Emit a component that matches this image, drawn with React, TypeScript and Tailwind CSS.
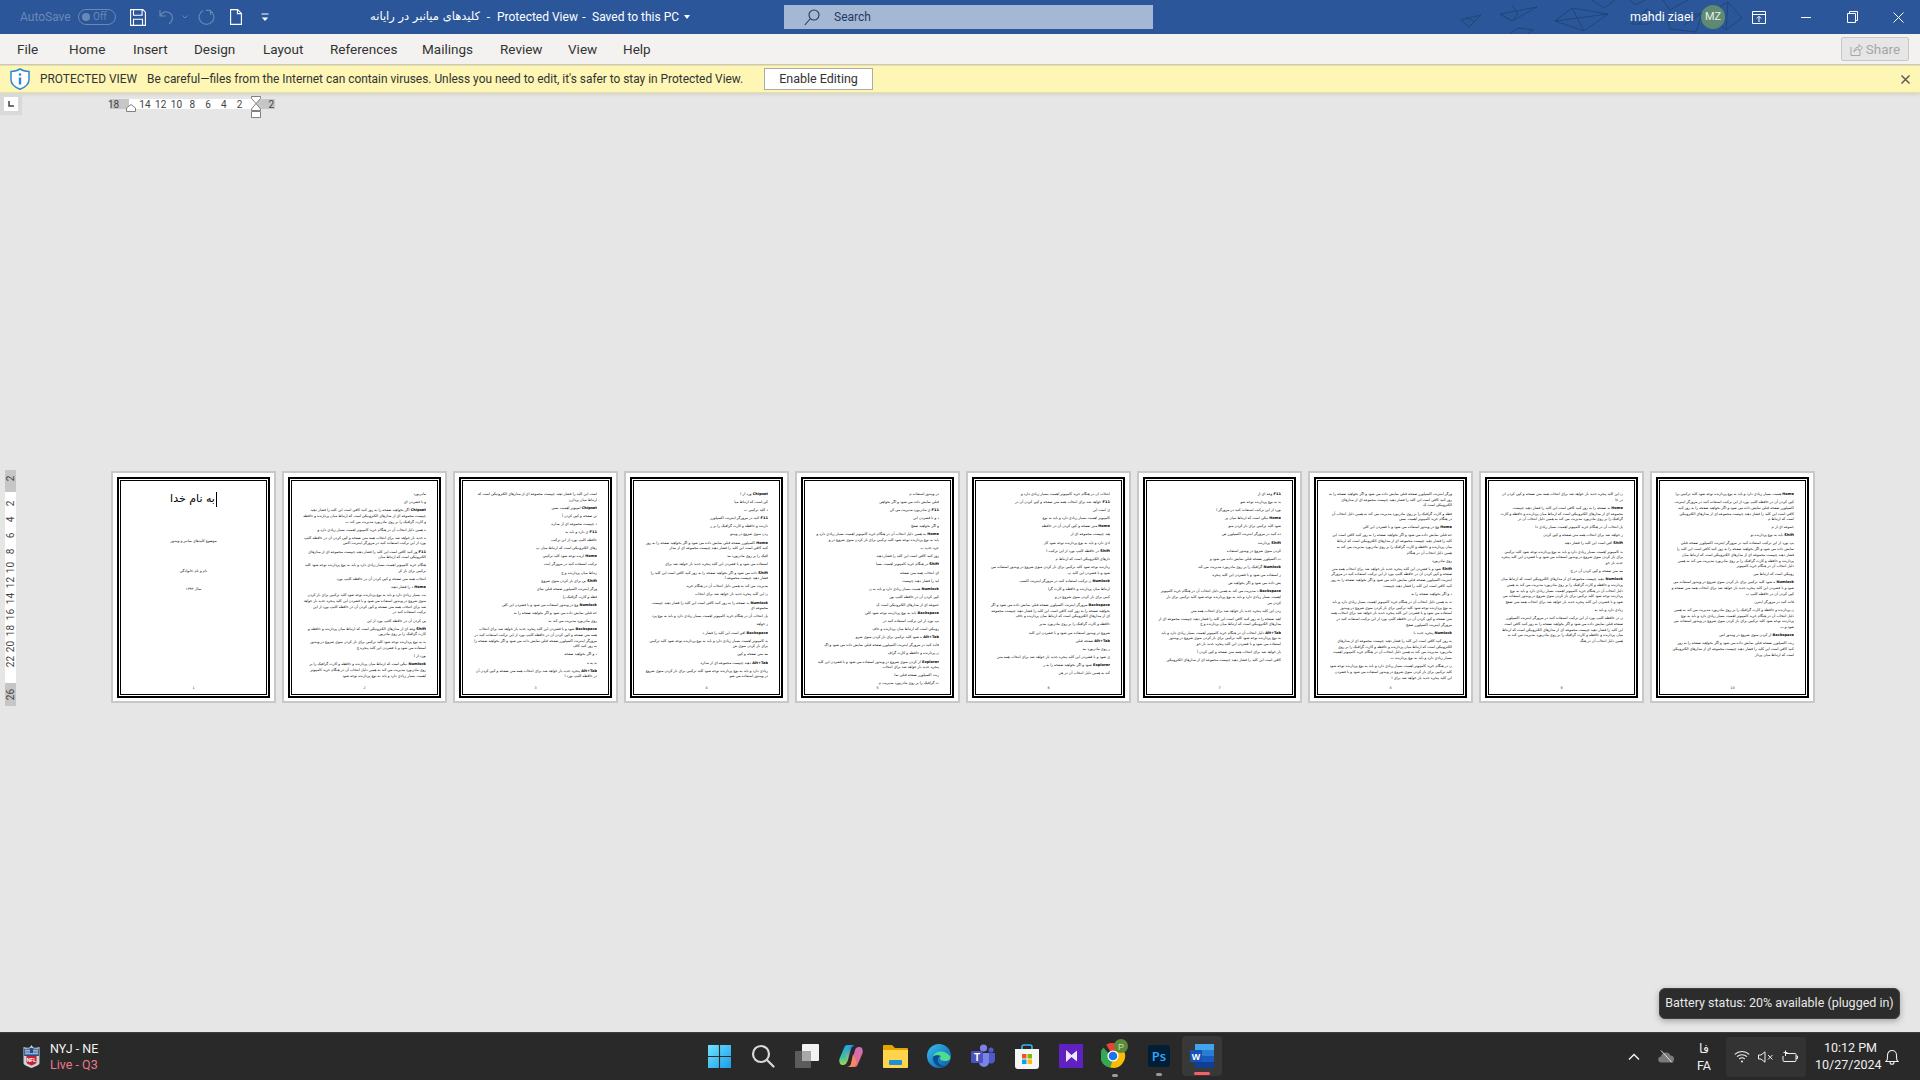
import React from "react";

const BASE =
  "کلید ترکیبی برای باز کردن منوی شروع در ویندوز استفاده می شود و با فشردن این کلید پنجره جدید باز خواهد شد برای انتخاب همه متن صفحه و کپی کردن آن در حافظه کلیپ بورد از این ترکیب استفاده کنید در مرورگر اینترنت اکسپلورر صفحه قبلی نمایش داده می شود و اگر بخواهید صفحه را به روز کنید کافی است این کلید را فشار دهید چیپست مجموعه ای از مدارهای الکترونیکی است که ارتباط میان پردازنده و حافظه و کارت گرافیک را بر روی مادربورد مدیریت می کند به همین دلیل انتخاب آن در هنگام خرید کامپیوتر اهمیت بسیار زیادی دارد و باید به نوع پردازنده توجه شود ";

const KEYS = ["Ctrl+O", "Alt+Tab", "Shift", "Chipset", "Explorer", "Numlock", "F11", "WinKey+E", "Backspace", "Home"];

const PAGES: number[][] = [
  [],
  [.13,.2,2.8,1.05,1.9,1.45,1.5,.8,.22,3.7,.55,1.45,1.75,.15,2.85],
  [1.35,.25,.3,.4,.25,.45,.55,.4,.5,.35,.4,.55,.3,.7,.75,.45,3.4,.3,.1,1.25],
  [.12,.3,.22,.5,.55,.33,1.9,.4,.95,1.4,.75,.7,1.05,1.15,.12,.4,1.5,.25,.45,1.55],
  [.3,.55,.35,.25,.25,2.15,.15,.6,.5,.35,.35,.5,.45,.55,.5,.55,.6,.6,1.05,.45,1.5,.4,.55],
  [.9,.75,.15,.7,.5,.33,.65,.5,.5,1.5,.65,.6,.5,2.85,.65,.75,.15,.25,1.05,.45,.5],
  [.15,.4,.65,.4,.5,.55,.12,.5,.6,.6,.65,.45,2.2,.85,1.9,2.9,.75,1.05],
  [2.4,1.6,.7,3.7,.2,3.9,.4,4.9,.2,3.9,2.9],
  [1.2,3.05,.85,.7,.45,2.5,.45,5.4,.3,4.8],
  [1.05,3.5,.2,.35,4.85,.35,2.5,.4,3.5,.45,2.55],
];

const CPL = 66;

function slice(n: number, off: number) {
  const len = Math.round(n * CPL);
  const start = (off * 37) % BASE.length;
  const rep = BASE + BASE + BASE + BASE;
  return rep.slice(start, start + len).trim();
}

function Sheet({ index }: { index: number }) {
  return (
    <div className="w-[165px] h-[232px] bg-white border-2 border-[#c8c8c8] pt-[4px] px-[4px] pb-[3px]">
      <div className="h-full border-2 border-black p-px">
        <div className="h-full border border-black flex flex-col px-[11px] pt-[11px] pb-[4px]" dir="rtl">
          <div className="flex-1 overflow-hidden font-['DejaVu_Sans',sans-serif] text-[3.6px] leading-[5.7px] text-black">
            {index === 0 ? (
              <div className="flex flex-col items-center -mt-[2px]">
                <div className="text-[11px] leading-[17px] border-r border-black pr-px">به نام خدا</div>
                <div className="mt-[32px]">موضوع کلیدهای میانبر و ویندوز</div>
                <div className="mt-[24px]">نام و نام خانوادگی</div>
                <div className="mt-[13px]">سال ۱۳۹۳</div>
              </div>
            ) : (
              PAGES[index].map((n, i) => (
                <p key={i} className="mb-[2.4px] text-right">
                  {(i + index) % 3 === 0 && <b>{KEYS[(i + index) % KEYS.length]} </b>}
                  {slice(n, i * 5 + index * 11)}
                </p>
              ))
            )}
          </div>
          <div className="text-center text-[3.4px] leading-[4px] text-[#333] font-['DejaVu_Sans',sans-serif]">{index + 1}</div>
        </div>
      </div>
    </div>
  );
}

function TitleIcons() {
  return (
    <div className="flex items-center">
      <svg width="16" height="17" viewBox="0 0 16 17" fill="none" stroke="#fff" strokeWidth="1.1" className="ml-[14px]">
        <path d="M.6.6h12.2l2.6 2.6v13.2H.6z" />
        <path d="M3.5.8v5.4h8.6V.8M3.5 16.2v-6h9v6" />
      </svg>
      <svg width="15" height="16" viewBox="0 0 15 16" fill="none" stroke="#6b88b3" strokeWidth="1.2" className="ml-[13px]">
        <path d="M1 1v6h6M1.4 6.6C3 4 5.5 2.6 8 3c3.6.5 6 3.6 5.4 7-.3 2-1.5 3.6-3.4 5" />
      </svg>
      <svg width="6" height="4" viewBox="0 0 6 4" fill="none" stroke="#6b88b3" className="ml-[8px]">
        <path d="M.5.5 3 3l2.5-2.5" />
      </svg>
      <svg width="17" height="17" viewBox="0 0 17 17" fill="none" stroke="#6b88b3" strokeWidth="1.1" className="ml-[10px]">
        <path d="M12 1.5a7.4 7.4 0 1 1-7 0M12.5 1v5M12.5 1.4H8" />
      </svg>
      <svg width="12" height="16" viewBox="0 0 12 16" fill="none" stroke="#fff" strokeWidth="1.1" className="ml-[15px]">
        <path d="M.6.6h7l3.8 3.8v11H.6zM7.4.8v3.8h3.8" />
      </svg>
      <svg width="8" height="9" viewBox="0 0 8 9" fill="none" stroke="#fff" className="ml-[19px]">
        <path d="M.5 1h7" />
        <path d="M.8 4.5h6.4L4 8z" fill="#fff" stroke="none" />
      </svg>
    </div>
  );
}

function Triangles() {
  return (
    <svg width="340" height="34" viewBox="0 0 340 34" fill="none" stroke="#1f4679" strokeWidth="1" className="absolute left-[1440px] top-0">
      <path d="M21 20l20-5-12 12zM26 17l8 4" />
      <path d="M60 14l37-7-25 14zM60 14l12 7M72 5l6 9-6 7" />
      <path d="M115 21l17-13 36 6-24 17zM132 8l12 23M115 21l53-7" />
      <path d="M152 0l12 8 11-8M190 0l5 5 10-5" />
      <path d="M191 24l16-15 8 4-6 11zM207 9l-8 15" />
      <path d="M70 34l8-6 15 2-5 4" />
      <path d="M228 22l34-9-6 19-26-3zM262 13l-18 12" />
      <path d="M268 14l20-12 14 16-16 12zM288 2l-2 28" />
      <path d="M223 0l7 10 18-10" />
    </svg>
  );
}

function RulerH() {
  const nums = ["14", "12", "10", "8", "6", "4", "2"];
  return (
    <div className="absolute left-[110px] top-[6px] flex h-[10px] text-[10px] leading-[11px] text-[#444] font-['Roboto',sans-serif]">
      <div className="w-[19px] bg-[#c6c6c6] flex justify-start"><span className="-ml-[2px]">18</span></div>
      <div className="w-[127px] bg-white flex pl-[8px]">
        {nums.map((n) => (
          <div key={n} className="w-[15.8px] text-center">{n}</div>
        ))}
      </div>
      <div className="w-[19px] bg-[#c6c6c6] flex justify-end pr-[1px]">2</div>
      <svg width="10" height="8" viewBox="0 0 10 8" className="absolute left-[16px] top-[5px]" fill="#fff" stroke="#808080">
        <path d="M.5 7.5v-3.500L5 .5 9.500 4v3.500z" />
      </svg>
      <svg width="10" height="23" viewBox="0 0 10 23" className="absolute left-[141px] top-[-3px]" fill="#fff" stroke="#808080">
        <path d="M.5.5h9v2L5 7.5.5 2.500zM.5 14.500v-1.500L5 7.500 9.500 13v1.500z" />
        <path d="M.5 15.500h9v6h-9z" />
      </svg>
    </div>
  );
}

function RulerV() {
  const nums = ["2", "4", "6", "8", "10", "12", "14", "16", "18", "20", "22"];
  return (
    <div className="w-[11px] h-[236px] ml-[5px] flex flex-col text-[10px] leading-[11px] text-[#444] font-['Roboto',sans-serif]">
      <div className="h-[22px] bg-[#c6c6c6] flex items-center justify-center pb-[6px]"><span className="-rotate-90">2</span></div>
      <div className="h-[191px] bg-white pt-[4px]">
        {nums.map((n) => (
          <div key={n} className="h-[15.8px] flex items-center justify-center"><span className="-rotate-90">{n}</span></div>
        ))}
      </div>
      <div className="h-[23px] bg-[#c6c6c6] flex items-center justify-center"><span className="-rotate-90">26</span></div>
    </div>
  );
}

function Win() {
  return (
    <svg width="23" height="23" viewBox="0 0 24 24">
      <defs>
        <linearGradient id="wg" x1="0" y1="0" x2="1" y2="1">
          <stop offset="0" stopColor="#6fe3ff" />
          <stop offset="1" stopColor="#1a9de8" />
        </linearGradient>
      </defs>
      <path d="M0 0h11.400v11.400H0zM12.600 0H24v11.400H12.600zM0 12.600h11.400V24H0zM12.600 12.600H24V24H12.600z" fill="url(#wg)" />
    </svg>
  );
}

function Search() {
  return (
    <svg width="24" height="24" viewBox="0 0 24 24" fill="none" stroke="#d9d9d9" strokeWidth="2.2">
      <circle cx="10" cy="10" r="8" />
      <path d="M16 16l6.500 6.500" strokeLinecap="round" />
    </svg>
  );
}

function TaskView() {
  return (
    <svg width="24" height="24" viewBox="0 0 24 24">
      <rect x="0" y="7" width="16" height="17" rx="1" fill="#5c5c5c" />
      <rect x="7" y="0" width="17" height="17" rx="1" fill="#f2f2f2" />
      <rect x="7" y="7" width="9" height="10" fill="#a8a8a8" />
    </svg>
  );
}

function Copilot() {
  return (
    <svg width="24" height="24" viewBox="0 0 24 24">
      <defs>
        <linearGradient id="c1" x1="0" y1="0" x2="0" y2="1"><stop offset="0" stopColor="#1aa7e8" /><stop offset=".6" stopColor="#37c2a8" /><stop offset="1" stopColor="#a6d84a" /></linearGradient>
        <linearGradient id="c2" x1="0" y1="0" x2="1" y2="1"><stop offset="0" stopColor="#b86bea" /><stop offset="1" stopColor="#f5706f" /></linearGradient>
        <linearGradient id="c3" x1="0" y1="0" x2="0" y2="1"><stop offset="0" stopColor="#2c7cf0" /><stop offset="1" stopColor="#ffc83d" /></linearGradient>
      </defs>
      <path d="M8 1h8c-2 0-3 1-4 3L8 18c-.600 2-2 3-4 3H3.500C.5 21-.5 17 .8 14L5.500 3C6 1.800 7 1 8 1z" fill="url(#c1)" />
      <path d="M16 23H8c2 0 3-1 4-3l4-14c.600-2 2-3 4-3h.500c3 0 4 4 2.700 7l-4.700 11c-.500 1.200-1.500 2-2.500 2z" fill="url(#c2)" />
      <path d="M11 2h5c-2 0-3 1-4 3L8.500 18 6 9z" fill="url(#c3)" opacity=".6" />
      <path d="M8 23h6c2-1 3-3 3.500-5L14 10l-2 10c-.500 2-2 3-4 3z" fill="#f78a5a" />
    </svg>
  );
}

function Folder() {
  return (
    <svg width="25" height="24" viewBox="0 0 25 24">
      <path d="M0 2a1 1 0 0 1 1-1h8l3 3h12a1 1 0 0 1 1 1v3H0z" fill="#e5a500" />
      <path d="M0 6h25v17a1 1 0 0 1-1 1H1a1 1 0 0 1-1-1z" fill="#ffd44d" />
      <rect x="6" y="16" width="13" height="5" rx="1" fill="#1c8fd9" />
    </svg>
  );
}

function Edge() {
  return (
    <svg width="24" height="24" viewBox="0 0 24 24">
      <defs>
        <linearGradient id="e1" x1="0" y1="0" x2="1" y2="1"><stop offset="0" stopColor="#35c1f1" /><stop offset="1" stopColor="#0c59a4" /></linearGradient>
      </defs>
      <circle cx="12" cy="12" r="12" fill="url(#e1)" />
      <path d="M6 12C8 7 17 5 23 12c1 3-1 5-5 5-3 0-5-1-5-3 0-1 1-2 1-2-3-1-6-1-8 0z" fill="#4fdc8f" />
      <path d="M6 13c-1 5 4 10 9 10 2 0 3-1 4-1-5 0-8-2-8-6 0-2 1-4 3-4-3-1-6-1-8 1z" fill="#0a4d92" />
    </svg>
  );
}

function Teams() {
  return (
    <svg width="24" height="24" viewBox="0 0 24 24">
      <circle cx="12.500" cy="4" r="3.600" fill="#7b83eb" />
      <circle cx="20" cy="6" r="2.600" fill="#5059c9" />
      <path d="M8 9h10v9a5 5 0 0 1-10 0z" fill="#7b83eb" />
      <path d="M18 9h6v7a4 4 0 0 1-6 3z" fill="#5059c9" />
      <rect x="0" y="7" width="12" height="12" rx="1.500" fill="#4b53bc" />
      <text x="6" y="16.500" textAnchor="middle" fontSize="10" fontWeight="700" fill="#fff" fontFamily="Liberation Sans, sans-serif">T</text>
    </svg>
  );
}

function Store() {
  return (
    <svg width="24" height="25" viewBox="0 0 24 25">
      <path d="M7 6V3a2 2 0 0 1 2-2h6a2 2 0 0 1 2 2v3" fill="none" stroke="#35b7f0" strokeWidth="1.600" />
      <path d="M0 5h24v17a3 3 0 0 1-3 3H3a3 3 0 0 1-3-3z" fill="#f5f5f5" />
      <path d="M7 10h4.500v4.500H7z" fill="#f25022" />
      <path d="M12.500 10H17v4.500h-4.500z" fill="#7fba00" />
      <path d="M7 15.500h4.500V20H7z" fill="#00a4ef" />
      <path d="M12.500 15.500H17V20h-4.500z" fill="#ffb900" />
    </svg>
  );
}

function Vs() {
  return (
    <svg width="24" height="24" viewBox="0 0 24 24">
      <rect width="24" height="24" rx="1" fill="#5f22c0" />
      <path d="M7 6l5.500 5L18 6.500v11L12.500 13 7 18z" fill="#efe6ff" />
    </svg>
  );
}

function Chrome() {
  return (
    <svg width="27" height="30" viewBox="0 0 27 30">
      <g transform="translate(0 5)">
        <path d="M12 12 5.200 .8A12 12 0 0 1 22.400 6z" fill="#ea4335" />
        <path d="M2.500 3.500A12 12 0 0 0 9 23.600L13 16z" fill="#34a853" />
        <path d="M23 7H13l-1 5 0 4-3 7.600A12 12 0 0 0 23 7z" fill="#fbbc04" />
        <circle cx="12" cy="12" r="5.600" fill="#fff" />
        <circle cx="12" cy="12" r="4.300" fill="#1a73e8" />
      </g>
      <circle cx="20" cy="7" r="7" fill="#5a8a3a" />
      <text x="20" y="10.500" textAnchor="middle" fontSize="9" fill="#c8e0b0" fontFamily="Liberation Sans, sans-serif">P</text>
    </svg>
  );
}

function Ps() {
  return (
    <div className="w-[22px] h-[22px] rounded-[3px] bg-[#001e36] flex items-center justify-center text-[13px] font-semibold text-[#31a8ff] font-['Open_Sans',sans-serif] leading-none">
      Ps
    </div>
  );
}

function Word() {
  return (
    <svg width="24" height="24" viewBox="0 0 24 24">
      <rect x="5" y="0" width="19" height="24" rx="1" fill="#2b7cd3" />
      <rect x="5" y="0" width="19" height="6" fill="#41a5ee" />
      <rect x="5" y="12" width="19" height="6" fill="#185abd" />
      <rect x="5" y="18" width="19" height="6" fill="#103f91" />
      <rect x="0" y="6" width="12" height="12" rx="1" fill="#1651b4" />
      <text x="6" y="15.500" textAnchor="middle" fontSize="9" fontWeight="700" fill="#fff" fontFamily="Liberation Sans, sans-serif">W</text>
    </svg>
  );
}

function Nfl() {
  return (
    <svg width="17" height="23" viewBox="0 0 17 23">
      <path d="M8.500 0 10 2.200c2 .8 4.500.6 6.500-.2v16c0 2-4 3.500-8 5-4-1.500-8-3-8-5V2c2 .8 4.500 1 6.500.2z" fill="#c9d2dd" />
      <path d="M1.200 3.500c2.500.6 4.800.4 7.300-.7 2.500 1.100 4.800 1.300 7.300.7V11H1.200z" fill="#1f4d8c" />
      <path d="M3.500 11h10v6.500c0 .8-2.500 2-5 3-2.500-1-5-2.200-5-3z" fill="#c8202f" />
      <path d="M2 5.200h5M2 7h5M2 8.800h13M10 5.200h5M10 7h5" stroke="#fff" strokeWidth=".8" />
      <text x="8.500" y="16.500" textAnchor="middle" fontSize="5" fontWeight="700" fill="#fff" fontFamily="Liberation Sans, sans-serif">NFL</text>
    </svg>
  );
}

export default function App() {
  const tabs: [string, number][] = [
    ["File", 52], ["Home", 64], ["Insert", 61], ["Design", 69], ["Layout", 67],
    ["References", 92], ["Mailings", 78], ["Review", 68], ["View", 55], ["Help", 40],
  ];
  return (
    <div className="w-[1920px] h-[1080px] overflow-hidden flex flex-col bg-[#e6e6e6] font-['Roboto',sans-serif]">
      {/* Title bar */}
      <div className="relative h-[34px] shrink-0 bg-[#2b579a] flex items-center text-white">
        <Triangles />
        <div className="w-[369px] shrink-0 flex items-center">
          <div className="ml-[20px] w-[58px] text-[12px] text-[#6b88b3]">AutoSave</div>
          <div className="w-[38px] h-[16px] rounded-full border border-[#6b88b3] flex items-center pl-[3px] gap-[3px] text-[10px] text-[#6b88b3] leading-none">
            <span className="w-[8px] h-[8px] rounded-full bg-[#6b88b3]" />Off
          </div>
          <TitleIcons />
        </div>
        <div className="w-[415px] shrink-0 flex items-center text-[12px] whitespace-nowrap">
          <div className="w-[111px] text-[11.5px] text-right font-['DejaVu_Sans',sans-serif]" dir="rtl">کلیدهای میانبر در رایانه</div>
          <div className="w-[17px] text-center">-</div>
          <div className="w-[79px]">Protected View</div>
          <div className="w-[16px] text-center">-</div>
          <div className="w-[86px]">Saved to this PC</div>
          <svg width="6" height="4" viewBox="0 0 6 4" fill="#fff" className="ml-[6px]"><path d="M0 0h6L3 4z" /></svg>
        </div>
        <div className="w-[369px] shrink-0 h-[24px] bg-[#a5b8d3] flex items-center text-[#1e3a66] text-[12px]">
          <svg width="16" height="17" viewBox="0 0 16 17" fill="none" stroke="#1e3a66" strokeWidth="1.100" className="ml-[20px]">
            <circle cx="10" cy="6" r="5" />
            <path d="M6.500 9.500.8 16" />
          </svg>
          <span className="ml-[14px]">Search</span>
        </div>
        <div className="relative ml-[477px] text-[12.5px] w-[71px] whitespace-nowrap">mahdi ziaei</div>
        <div className="relative w-[24px] h-[24px] rounded-full bg-[#5e8a72] flex items-center justify-center text-[11px] text-[#e8f0e8]">MZ</div>
        <svg width="14" height="13" viewBox="0 0 14 13" fill="none" stroke="#fff" className="relative ml-[27px]">
          <path d="M.5.500h13v12H.5zM.5 3.500h13M7 11V5.500M4.800 7.500 7 5.300l2.200 2.200" />
        </svg>
        <div className="relative ml-[35px] w-[10px] h-px bg-white" />
        <svg width="11" height="12" viewBox="0 0 11 12" fill="none" stroke="#fff" className="relative ml-[36px]">
          <path d="M.5 2.500h8v9h-8zM2.500 2.500v-2h8v9h-2" />
        </svg>
        <svg width="11" height="11" viewBox="0 0 11 11" fill="none" stroke="#fff" className="relative ml-[35px]">
          <path d="M.5.5l10 10M10.500.5l-10 10" />
        </svg>
      </div>

      {/* Tabs */}
      <div className="h-[31px] shrink-0 bg-[#f3f2f1] border-b border-[#c9c8c6] flex items-center pl-[17px] pt-[1px] text-[13.5px] text-[#333]">
        {tabs.map(([t, w]) => (
          <div key={t} className="shrink-0" style={{ width: w }}>{t}</div>
        ))}
        <div className="ml-auto mr-[11px] -mt-[1px] w-[68px] h-[24px] bg-[#e6e6e6] border border-[#c8c8c8] rounded-[2px] flex items-center justify-center gap-[3px] text-[13.5px] text-[#a6a6a6]">
          <svg width="13" height="13" viewBox="0 0 13 13" fill="none" stroke="#a6a6a6">
            <path d="M1 4v8.500h9V8M4 9c0-3 2-5 5-5V1.500L12.500 5 9 8V6C7 6 5 7 4 9z" />
          </svg>
          Share
        </div>
      </div>

      {/* Protected view bar */}
      <div className="h-[28px] shrink-0 bg-[#fdf6b5] border-y border-[#e9e19c] flex items-center text-[11.9px] text-[#333] shadow-[0_2px_3px_rgba(0,0,0,0.08)]">
        <svg width="20" height="22" viewBox="0 0 20 22" className="ml-[10px]">
          <path d="M10 .8c2 1.600 5 2.600 9 2.600v8c0 4.500-4 7.800-9 9.800-5-2-9-5.300-9-9.800v-8c4 0 7-1 9-2.600z" fill="#fff" stroke="#2b88d8" strokeWidth="1.500" />
          <circle cx="10" cy="6.500" r="1.300" fill="#2b88d8" />
          <path d="M8.800 9.500h2.400v7H8.800z" fill="#2b88d8" />
        </svg>
        <span className="ml-[10px] mt-[2px] w-[107px] whitespace-nowrap">PROTECTED VIEW</span>
        <span className="mt-[2px] w-[617px] whitespace-nowrap">Be careful—files from the Internet can contain viruses. Unless you need to edit, it's safer to stay in Protected View.</span>
        <div className="w-[109px] h-[22px] bg-white border border-[#ababab] flex items-center justify-center pt-[1px] text-[12.5px]">Enable Editing</div>
        <svg width="9" height="9" viewBox="0 0 9 9" stroke="#555" strokeWidth="1.400" className="ml-auto mr-[10px]">
          <path d="M.5.5l8 8M8.500.5l-8 8" />
        </svg>
      </div>

      {/* Document area */}
      <div className="relative flex-1 min-h-0">
        <div className="absolute left-0 top-0 w-[22px] h-[22px] bg-[#d9d9d9] pl-[4px] pt-[4px]">
          <div className="w-[14px] h-[14px] bg-white flex items-center justify-center">
            <svg width="6" height="6" viewBox="0 0 6 6" fill="none" stroke="#444" strokeWidth="1.500"><path d="M1 0v5h5" /></svg>
          </div>
        </div>
        <RulerH />
        <div className="flex items-start pt-[377px]">
          <RulerV />
          <div className="ml-[95px] mt-px flex gap-[6px]">
            {PAGES.map((_, i) => (
              <Sheet key={i} index={i} />
            ))}
          </div>
        </div>
      </div>

      {/* Taskbar */}
      <div className="relative h-[48px] shrink-0 bg-[#292929] border-t border-[#3d3d3d] flex items-center text-white">
        <div className="absolute left-[1659px] top-[-45px] w-[241px] h-[31px] rounded-[6px] bg-[#2c2c2c] border border-[#3e3e3e] shadow-[0_2px_6px_rgba(0,0,0,0.3)] flex items-center justify-center text-[12.5px] text-[#e8e8e8] whitespace-nowrap">
          Battery status: 20% available (plugged in)
        </div>
        <div className="ml-[23px] w-[27px]"><Nfl /></div>
        <div className="w-[60px] text-[12.5px] leading-[16px]">
          <div className="text-[#f2f2f2]">NYJ - NE</div>
          <div className="text-[#e9798b]">Live - Q3</div>
        </div>
        <div className="ml-[587px] -mt-[1px] flex items-center">
          {[<Win key="a" />, <Search key="b" />, <TaskView key="c" />, <Copilot key="d" />, <Folder key="e" />, <Edge key="f" />, <Teams key="g" />, <Store key="h" />, <Vs key="i" />].map((ic, i) => (
            <div key={i} className="w-[44px] flex justify-center">{ic}</div>
          ))}
          <div className="w-[44px] relative flex justify-start pl-[8px]">
            <div className="-mt-[4px]"><Chrome /></div>
            <div className="absolute left-[19px] top-[31px] w-[6px] h-[3px] rounded-full bg-[#9a9a9a]" />
          </div>
          <div className="w-[44px] relative flex justify-center">
            <Ps />
            <div className="absolute left-[19px] top-[28px] w-[6px] h-[3px] rounded-full bg-[#9a9a9a]" />
          </div>
          <div className="w-[40px] h-[40px] ml-[1px] rounded-[4px] bg-[#383838] relative flex items-center justify-center">
            <Word />
            <div className="absolute left-[12px] bottom-[1px] w-[16px] h-[3px] rounded-full bg-[#f0636a]" />
          </div>
        </div>
        <svg width="12" height="8" viewBox="0 0 12 8" fill="none" stroke="#f0f0f0" strokeWidth="1.500" className="ml-[406px]"><path d="M1 6.500 6 1.500l5 5" /></svg>
        <svg width="16" height="13" viewBox="0 0 16 13" className="ml-[18px]">
          <path d="M3.500 12.500a3 3 0 0 1-.5-6 5 5 0 0 1 9.500-1 3.500 3.500 0 0 1 0 7z" fill="#7a7a7a" />
          <path d="M3 .5l11 12" stroke="#e0e0e0" strokeWidth="1" />
        </svg>
        <div className="ml-[24px] w-[12px] text-[12.5px] leading-[17px] text-center text-[#f0f0f0]">
          <div className="font-['DejaVu_Sans',sans-serif] whitespace-nowrap flex justify-center">فا</div>
          <div className="flex justify-center">FA</div>
        </div>
        <div className="ml-[16px] w-[80px] h-[40px] rounded-[4px] bg-[#333333] flex items-center justify-center gap-[8px]">
          <svg width="16" height="13" viewBox="0 0 16 13" fill="none" stroke="#f0f0f0" strokeWidth="1.100">
            <path d="M.8 4.300a10.500 10.500 0 0 1 14.400 0M3 6.700a7.300 7.300 0 0 1 10 0M5.300 9a4 4 0 0 1 5.400 0" />
            <circle cx="8" cy="11.500" r="1" fill="#f0f0f0" stroke="none" />
          </svg>
          <svg width="16" height="12" viewBox="0 0 16 12" fill="none" stroke="#f0f0f0" strokeWidth="1">
            <path d="M.5 4h2.500L7 .8v10.400L3 8H.5zM10 4l4.500 4.500M14.500 4 10 8.500" />
          </svg>
          <svg width="16" height="13" viewBox="0 0 16 13" fill="none" stroke="#f0f0f0" strokeWidth="1">
            <path d="M4 3.500h9a1 1 0 0 1 1 1v6a1 1 0 0 1-1 1H2a1 1 0 0 1-1-1V6M14 6h1.500v2.500H14" />
            <path d="M3.500 .5v5.500M1.500 2.500h4" />
          </svg>
        </div>
        <div className="ml-[9px] w-[62px] text-[12.5px] leading-[16.500px] text-right text-[#f0f0f0] whitespace-nowrap">
          <div>10:12 PM</div>
          <div>10/27/2024</div>
        </div>
        <svg width="14" height="16" viewBox="0 0 14 16" fill="none" stroke="#f0f0f0" strokeWidth="1.100" className="ml-[8px]">
          <path d="M1 12.500c1-1 1.500-2 1.500-4V6a4.500 4.500 0 0 1 9 0v2.500c0 2 .5 3 1.500 4zM5 13c0 1.500.8 2.300 2 2.300s2-.8 2-2.300" />
        </svg>
      </div>
    </div>
  );
}
